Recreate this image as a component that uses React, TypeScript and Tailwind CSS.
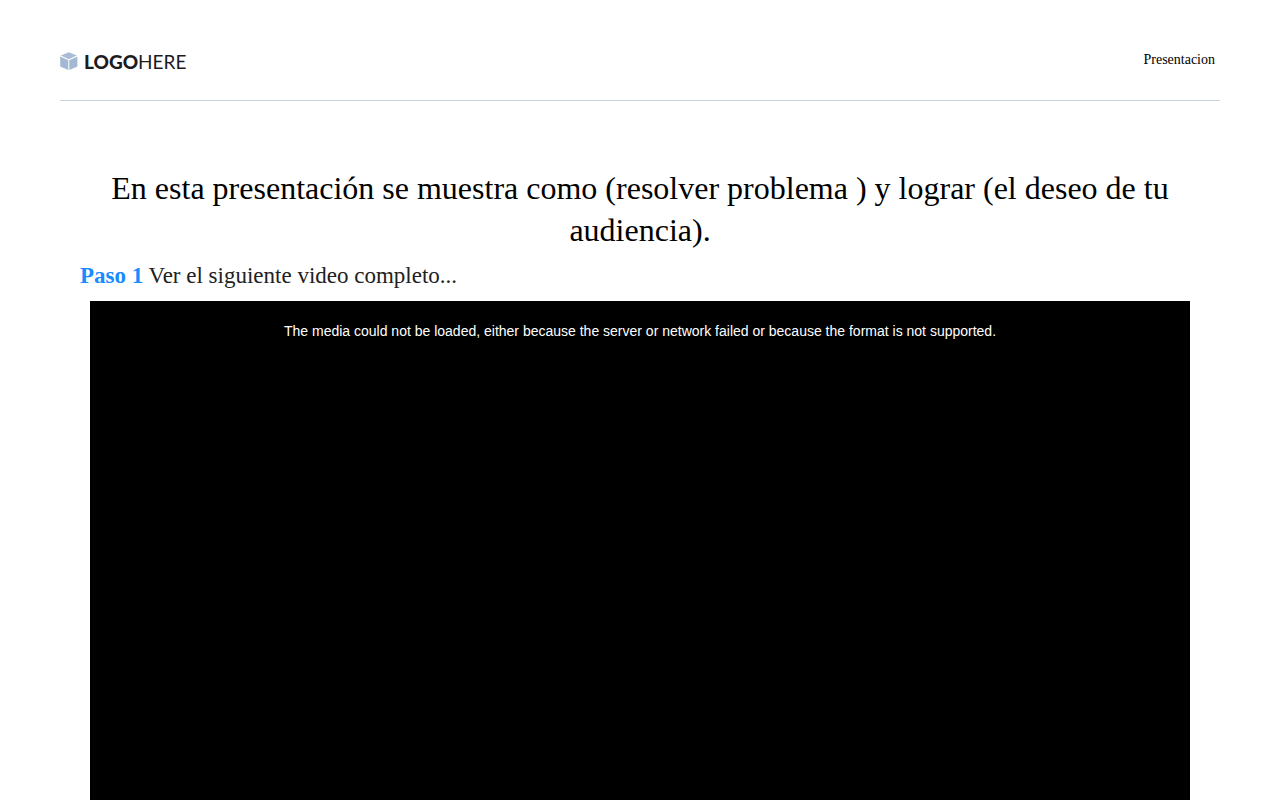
function Logo() {
  return (
    <a href="#" aria-label="Logo here" className="flex h-6 items-center gap-1.5">
      <svg viewBox="0 0 18 20" className="h-5 w-[18px]" aria-hidden="true">
        <path fill="#a9bdd6" d="M8.8 0.2 16.8 3.6 8.8 7.2 0.8 3.6Z" />
        <path fill="#a3b8d2" d="M0.2 4.6 8.3 8.2V18L0.2 14.6Z" />
        <path fill="#a3b8d2" d="M17.4 4.6 9.3 8.2V18L17.4 14.6Z" />
      </svg>
      <span className="font-[Lato,sans-serif] text-[19px] leading-6 text-[#1c1c1f]">
        <span className="font-black">LOGO</span>HERE
      </span>
    </a>
  );
}

function Header() {
  return (
    <header className="mx-[60px] flex items-start justify-between border-b border-[#c6d3e1] pt-[50px] pb-[26px]">
      <Logo />
      <nav className="px-[5px] text-sm">
        <a href="#">Presentacion</a>
      </nav>
    </header>
  );
}

function VideoPlayer() {
  return (
    <section
      aria-label="Video"
      className="mx-[10px] aspect-video bg-black p-5 text-center font-['Liberation_Sans',Arial,sans-serif] text-sm text-white"
    >
      <p>The media could not be loaded, either because the server or network failed or because the format is not supported.</p>
    </section>
  );
}

export default function App() {
  return (
    <div className="min-h-screen bg-white font-['Liberation_Serif','Times_New_Roman',serif] text-black">
      <Header />
      <main className="px-20 pt-[66px]">
        <h1 className="px-5 text-center text-[32px] leading-[42px]">
          En esta presentación se muestra como (resolver problema ) y lograr (el deseo de tu audiencia).
        </h1>
        <h2 className="py-2 text-[23px] leading-[34px] text-[#212121]">
          <strong className="text-[#188bff]">Paso 1</strong> Ver el siguiente video completo...
        </h2>
        <VideoPlayer />
      </main>
    </div>
  );
}
